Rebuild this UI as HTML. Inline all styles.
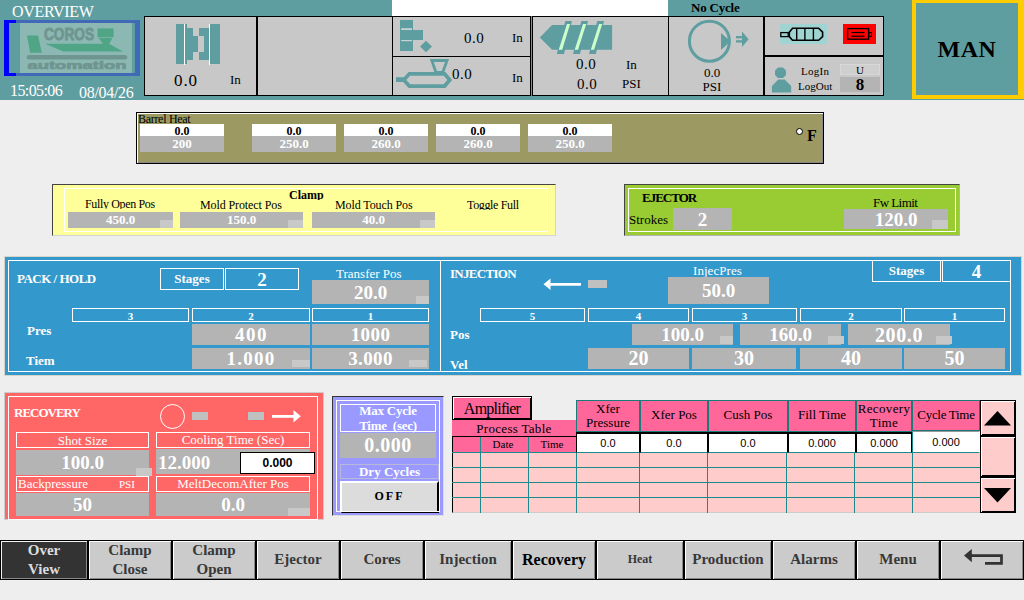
<!DOCTYPE html>
<html><head><meta charset="utf-8"><title>Overview</title>
<style>
html,body{margin:0;padding:0;}
body{width:1024px;height:600px;overflow:hidden;background:#eeeeee;position:relative;font-family:"Liberation Serif",serif;color:#000;}
.a{position:absolute;box-sizing:border-box;white-space:nowrap;line-height:1;}
.c{text-align:center;}
.b{font-weight:bold;}
.w{color:#fff;}
.g{background:#b4b4b4;}
.sq{background:#c8c8c8;}
.p{background:#c8c8c8;border:1px solid #000;}
.wf{border:1px solid #fff;}
.f20{font-size:20px;font-weight:bold;color:#fff;text-align:center;}
.f19{font-size:19px;font-weight:bold;color:#fff;text-align:center;}
.f13{font-size:13px;}
.f12{font-size:12px;}
.f11{font-size:11px;}
.sans{font-family:"Liberation Sans",sans-serif;}
.nb{top:540px;height:40px;background:#cbcbcb;border:1px solid #000;box-shadow:inset 1px 1px 0 #fff,inset -1px -1px 0 #888;font-size:15px;font-weight:bold;color:#383838;text-align:center;padding-top:0.4px;}
.hc{background:#ff6699;border:1px solid #1a7a7a;font-size:13px;text-align:center;top:400px;height:32px;}
.wc{background:#fff;border:1px solid #000;border-top-width:2px;border-bottom-color:#1a8a8a;top:432px;height:21px;font-family:"Liberation Sans",sans-serif;font-size:11px;text-align:center;line-height:19px;}
</style></head><body>
<!-- HEADER -->
<div class="a" id="hdr" style="left:0;top:0;width:1024px;height:100px;background:#5f9ea0;"></div>
<div class="a" style="left:392px;top:0;width:276px;height:16px;background:#fff;"></div>
<div class="a w" style="left:12px;top:4px;font-size:16px;letter-spacing:-0.3px;">OVERVIEW</div>
<div class="a w" style="left:10px;top:83px;font-size:16px;letter-spacing:-0.6px;">15:05:06</div>
<div class="a w" style="left:79px;top:85px;font-size:16px;letter-spacing:-0.3px;">08/04/26</div>
<!-- logo -->
<div class="a" style="left:4px;top:20px;width:136px;height:56px;border:3px solid #4169b8;border-right-width:5px;"></div>
<div class="a" style="left:4px;top:20px;width:12px;height:56px;border:3px solid #0000ff;border-left-width:5px;border-right:0;"></div>
<div class="a" style="left:20px;top:23px;width:112px;height:50px;background:#8cb8b4;"></div>
<svg class="a" style="left:20px;top:23px;" width="112" height="50" viewBox="0 0 112 50">
<polygon points="7,12.4 18,12.4 21.8,29.8 10.2,29.8" fill="#4fa585"/>
<polygon points="25,20.8 89,20.8 103,28.4 43.3,28.4" fill="#4fa585"/>
<rect x="77.5" y="5.4" width="16.1" height="8.7" fill="#4fa585"/>
<polygon points="78.5,14.8 92.5,14.8 89,21 83,21" fill="#4fa585"/>
<rect x="6.7" y="32" width="100.6" height="4.4" rx="2.2" fill="#6f9591"/>
<text x="24" y="17.3" font-family="Liberation Sans, sans-serif" font-weight="bold" font-size="17" fill="#6f9591" stroke="#6f9591" stroke-width="0.9" textLength="50" lengthAdjust="spacingAndGlyphs">COROS</text>
<text x="7.5" y="45.8" font-family="Liberation Sans, sans-serif" font-weight="bold" font-size="11" fill="#6f9591" stroke="#6f9591" stroke-width="0.7" textLength="99" lengthAdjust="spacingAndGlyphs">automation</text>
</svg>
<!-- panel 1 clamp -->
<div class="a p" style="left:144px;top:16px;width:113px;height:80px;"></div>
<div class="a p" style="left:256px;top:16px;width:137px;height:80px;border-left-width:2px;"></div>
<svg class="a" style="left:175px;top:23px;" width="46" height="42" viewBox="0 0 46 42" shape-rendering="crispEdges">
<rect x="1" y="1" width="11" height="40" fill="#5f9ea0"/><rect x="9" y="0.6" width="1.2" height="41" fill="#fff"/>
<rect x="12" y="5" width="6" height="32" fill="#5f9ea0"/><rect x="18" y="13" width="4.7" height="16" fill="#5f9ea0"/>
<polygon points="24,5 33.8,5 33.8,37 24,37 24,29 28.7,29 28.7,13 24,13" fill="#5f9ea0"/>
<rect x="33.8" y="0.6" width="1.2" height="41" fill="#fff"/><rect x="35" y="1" width="9.7" height="40" fill="#5f9ea0"/>
</svg>
<div class="a" style="left:174px;top:72px;font-size:17px;letter-spacing:0.9px;">0.0</div>
<div class="a" style="left:230px;top:73px;font-size:13px;">In</div>
<!-- panel 3 -->
<div class="a p" style="left:392px;top:16px;width:139px;height:41px;"></div>
<div class="a p" style="left:392px;top:56px;width:139px;height:40px;"></div>
<svg class="a" style="left:396px;top:18px;" width="40" height="36" viewBox="0 0 40 36">
<rect x="4" y="2" width="13" height="31" fill="#5f9ea0"/><rect x="4" y="12" width="23" height="10" fill="#5f9ea0"/>
<rect x="5.2" y="10.2" width="10.8" height="1.8" fill="#c4d4d4"/><rect x="5.2" y="22" width="10.8" height="1.2" fill="#c4d4d4"/>
<polygon points="30,22.8 36,28.5 30,34.2 24,28.5" fill="#5f9ea0"/>
</svg>
<div class="a" style="left:464px;top:31px;font-size:15px;letter-spacing:0.5px;">0.0</div>
<div class="a" style="left:512px;top:31px;font-size:13px;">In</div>
<svg class="a" style="left:394px;top:57px;" width="60" height="34" viewBox="0 0 60 34">
<rect x="2" y="20.2" width="9" height="4.8" fill="#5f9ea0"/>
<polygon points="9.8,22.95 15.4,16.85 50.6,16.85 55.8,22.95 50.6,29.05 15.4,29.05" fill="none" stroke="#5f9ea0" stroke-width="3.7" stroke-linejoin="miter"/>
<polygon points="37.8,3.5 53.1,3.5 48.6,15.5 42,15.5" fill="none" stroke="#5f9ea0" stroke-width="2.8"/>
</svg>
<div class="a" style="left:452px;top:67px;font-size:15px;letter-spacing:0.5px;">0.0</div>
<div class="a" style="left:512px;top:71px;font-size:13px;">In</div>
<!-- panel 4 screw -->
<div class="a p" style="left:532px;top:16px;width:137px;height:80px;"></div>
<svg class="a" style="left:538px;top:18px;" width="78" height="38" viewBox="0 0 78 38">
<polygon points="1.8,19.4 14.1,7 74.1,7 74.1,31.8 14.1,31.8" fill="#5f9ea0"/>
<g fill="#5f9ea0"><polygon points="18.8,36 26,36 33.9,3 27.3,3"/><polygon points="35,36 42,36 50,3 43.3,3"/><polygon points="51,36 57.9,36 66,3 59.2,3"/></g>
<g fill="#ccffcc"><polygon points="20.7,31.8 24.2,31.8 32.1,6 29,6"/><polygon points="36.7,31.8 40,31.8 48.2,6 45,6"/><polygon points="52.8,31.8 56.1,31.8 64.2,6 61.1,6"/></g>
</svg>
<div class="a" style="left:576px;top:57px;font-size:15px;letter-spacing:0.5px;">0.0</div>
<div class="a" style="left:626px;top:58px;font-size:13px;">In</div>
<div class="a" style="left:577px;top:77px;font-size:15px;letter-spacing:0.5px;">0.0</div>
<div class="a" style="left:622px;top:77px;font-size:13px;">PSI</div>
<!-- panel 5 pump -->
<div class="a b" style="left:691px;top:1px;font-size:13px;letter-spacing:-0.2px;">No Cycle</div>
<div class="a p" style="left:668px;top:16px;width:97px;height:80px;border-right-width:2px;"></div>
<svg class="a" style="left:685px;top:18px;" width="70" height="48" viewBox="0 0 70 48">
<circle cx="24.4" cy="23.2" r="20" fill="none" stroke="#5f9ea0" stroke-width="3"/>
<polygon points="36,15 36,32 45.6,23.2" fill="#5f9ea0"/>
<g stroke="#5f9ea0" stroke-width="2.3" fill="none"><line x1="51" y1="19.2" x2="59" y2="19.2"/><line x1="51" y1="23.4" x2="59" y2="23.4"/></g>
<polygon points="57,13.6 63.6,21.2 57,29" fill="#5f9ea0"/>
</svg>
<div class="a c" style="left:692px;top:66px;width:40px;font-size:13px;">0.0</div>
<div class="a c" style="left:692px;top:80px;width:40px;font-size:13px;">PSI</div>
<!-- panel 6 -->
<div class="a p" style="left:763px;top:16px;width:121px;height:41px;border-left-width:2px;border-bottom-width:2px;"></div>
<div class="a p" style="left:763px;top:55px;width:121px;height:41px;border-left-width:2px;border-top-width:2px;"></div>
<div class="a" style="left:780px;top:24px;width:47px;height:20px;background:#9fd4d2;"></div>
<svg class="a" style="left:780px;top:24px;" width="47" height="20" viewBox="0 0 47 20">
<rect x="0.8" y="8.6" width="7.4" height="4" fill="#9fd4d2" stroke="#000" stroke-width="1.3"/>
<polygon points="9.3,8.2 12.5,4.2 38.6,4.2 42.6,8.2 42.6,12.6 38.6,16.3 12.5,16.3 9.3,12.6" fill="#9fd4d2" stroke="#000" stroke-width="1.6"/>
<g stroke="#000" stroke-width="1.4"><line x1="16.7" y1="4.2" x2="16.7" y2="16.3"/><line x1="24.9" y1="4.2" x2="24.9" y2="16.3"/><line x1="33.4" y1="4.2" x2="33.4" y2="16.3"/></g>
</svg>
<div class="a" style="left:843px;top:24px;width:33px;height:20px;background:#ff0000;"></div>
<svg class="a" style="left:843px;top:24px;" width="33" height="20" viewBox="0 0 33 20">
<rect x="4.6" y="4.6" width="21" height="10.6" fill="none" stroke="#000" stroke-width="1.3"/>
<rect x="25.8" y="8.6" width="2.6" height="3.8" fill="none" stroke="#000" stroke-width="1"/>
<g stroke="#000" stroke-width="1.2"><line x1="8" y1="8.5" x2="21.5" y2="8.5"/><line x1="8" y1="12.2" x2="21.5" y2="12.2"/></g>
</svg>
<svg class="a" style="left:770px;top:64.7px;" width="24" height="30" viewBox="0 0 24 30">
<polygon points="8,2.5 13,2.5 16,5.5 16,10 13,13 8,13 5,10 5,5.5" fill="#5f9ea0"/>
<polygon points="8.3,14.5 14.7,14.5 21.2,21 21.2,27.6 1.9,27.6 1.9,21" fill="#5f9ea0"/>
</svg>
<div class="a" style="left:801px;top:65.5px;font-size:11px;letter-spacing:0.25px;">LogIn</div>
<div class="a" style="left:798px;top:80.5px;font-size:11px;">LogOut</div>
<div class="a c" style="left:840px;top:64px;width:40px;height:11px;background:#cfcfcf;border:1px solid #d8d8d8;font-size:11px;line-height:10px;">U</div>
<div class="a c b" style="left:840px;top:77px;width:40px;height:15px;background:#b4b4b4;font-size:17px;line-height:15px;">8</div>
<!-- MAN -->
<div class="a c b" style="left:912px;top:0;width:112px;height:99px;border:4px solid #ffcc00;border-top-width:3px;border-right-width:6px;font-size:24px;line-height:92px;padding-left:0px;letter-spacing:0.5px;">MAN</div>

<!-- BARREL HEAT -->
<div class="a" style="left:136px;top:112px;width:688px;height:52px;background:#9c9a62;border:1px solid #000;box-shadow:inset 1px 1px 0 #fff,inset -1px -1px 0 #888;"></div>
<div class="a" style="left:138px;top:113px;font-size:12px;letter-spacing:-0.3px;">Barrel Heat</div>
<div class="a c b" style="left:140px;top:124px;width:84px;height:12px;background:#fff;font-size:12px;line-height:14px;">0.0</div>
<div class="a c b w g" style="left:140px;top:136px;width:84px;height:16px;font-size:13px;line-height:16px;">200</div>
<div class="a c b" style="left:252px;top:124px;width:84px;height:12px;background:#fff;font-size:12px;line-height:14px;">0.0</div>
<div class="a c b w g" style="left:252px;top:136px;width:84px;height:16px;font-size:13px;line-height:16px;">250.0</div>
<div class="a c b" style="left:344px;top:124px;width:84px;height:12px;background:#fff;font-size:12px;line-height:14px;">0.0</div>
<div class="a c b w g" style="left:344px;top:136px;width:84px;height:16px;font-size:13px;line-height:16px;">260.0</div>
<div class="a c b" style="left:436px;top:124px;width:84px;height:12px;background:#fff;font-size:12px;line-height:14px;">0.0</div>
<div class="a c b w g" style="left:436px;top:136px;width:84px;height:16px;font-size:13px;line-height:16px;">260.0</div>
<div class="a c b" style="left:528px;top:124px;width:84px;height:12px;background:#fff;font-size:12px;line-height:14px;">0.0</div>
<div class="a c b w g" style="left:528px;top:136px;width:84px;height:16px;font-size:13px;line-height:16px;">250.0</div>
<div class="a" style="left:796px;top:128px;width:7px;height:7px;border-radius:50%;background:#fff;border:1px solid #000;"></div>
<div class="a b" style="left:807px;top:128px;font-size:16px;">F</div>
<!-- CLAMP -->
<div class="a" style="left:52px;top:184px;width:504px;height:52px;background:#ffff99;border:1px solid #d4d4d4;border-top-color:#444;border-left-color:#444;"></div>
<div class="a wf" style="left:64px;top:188px;width:484px;height:44px;"></div>
<div class="a b" style="left:289px;top:189px;font-size:12px;height:11px;overflow:hidden;">Clamp</div>
<div class="a" style="left:85px;top:198px;font-size:12px;letter-spacing:-0.35px;height:11px;overflow:hidden;">Fully Open Pos</div>
<div class="a" style="left:200px;top:199px;font-size:12px;letter-spacing:-0.1px;">Mold Protect Pos</div>
<div class="a" style="left:335px;top:199px;font-size:12px;letter-spacing:-0.1px;">Mold Touch Pos</div>
<div class="a" style="left:467px;top:199px;font-size:12px;letter-spacing:-0.35px;height:11px;overflow:hidden;">Toggle Full</div>
<div class="a c b w g" style="left:68px;top:212px;width:105px;height:16px;font-size:13px;line-height:16px;">450.0</div>
<div class="a sq" style="left:160px;top:220px;width:13px;height:8px;"></div>
<div class="a c b w g" style="left:180px;top:212px;width:123px;height:16px;font-size:13px;line-height:16px;">150.0</div>
<div class="a sq" style="left:288px;top:220px;width:15px;height:8px;"></div>
<div class="a c b w g" style="left:312px;top:212px;width:123px;height:16px;font-size:13px;line-height:16px;">40.0</div>
<div class="a sq" style="left:420px;top:220px;width:15px;height:8px;"></div>
<!-- EJECTOR -->
<div class="a" style="left:624px;top:184px;width:336px;height:52px;background:#99cc33;border:1px solid #b4b4b4;border-top-color:#444;border-left-color:#444;"></div>
<div class="a wf" style="left:628px;top:188px;width:328px;height:44px;"></div>
<div class="a b" style="left:642px;top:191px;font-size:13px;letter-spacing:-1px;">EJECTOR</div>
<div class="a" style="left:629px;top:213px;font-size:13px;">Strokes</div>
<div class="a g f19" style="left:673px;top:208px;width:59px;height:22px;line-height:24px;">2</div>
<div class="a" style="left:873px;top:196px;font-size:13px;letter-spacing:-0.55px;">Fw Limit</div>
<div class="a g f19" style="left:844px;top:209px;width:104px;height:20px;line-height:21px;">120.0</div>
<div class="a sq" style="left:932px;top:220px;width:16px;height:9px;"></div>
<!-- PACK/HOLD + INJECTION -->
<div class="a" style="left:4px;top:256px;width:1018px;height:120px;background:#3399cc;border:1px solid #d8d4cc;"></div>
<div class="a wf" style="left:8px;top:260px;width:1003px;height:112px;"></div>
<div class="a" style="left:440px;top:260px;width:1px;height:112px;background:#fff;"></div>
<div class="a b w" style="left:17px;top:272px;font-size:13px;letter-spacing:-0.5px;">PACK / HOLD</div>
<div class="a wf c b w" style="left:160px;top:268px;width:64px;height:22px;font-size:13px;line-height:20px;">Stages</div>
<div class="a wf f19" style="left:225px;top:268px;width:74px;height:22px;line-height:21px;">2</div>
<div class="a w" style="left:336px;top:267px;font-size:13px;">Transfer Pos</div>
<div class="a g f19" style="left:312px;top:280px;width:117px;height:24px;line-height:25px;">20.0</div>
<div class="a sq" style="left:416px;top:296px;width:13px;height:8px;"></div>
<div class="a wf c b w f11" style="left:72px;top:308px;width:117px;height:14px;line-height:14px;overflow:hidden;">3</div>
<div class="a wf c b w f11" style="left:192px;top:308px;width:118px;height:14px;line-height:14px;overflow:hidden;">2</div>
<div class="a wf c b w f11" style="left:312px;top:308px;width:117px;height:14px;line-height:14px;overflow:hidden;">1</div>
<div class="a b w" style="left:27px;top:324px;font-size:13px;">Pres</div>
<div class="a b w" style="left:26px;top:354px;font-size:13px;">Tiem</div>
<div class="a g f19" style="left:192px;top:324px;width:118px;height:21px;line-height:21px;letter-spacing:1.5px;padding-left:1px;">400</div>
<div class="a g f19" style="left:312px;top:324px;width:117px;height:21px;line-height:21px;letter-spacing:0.4px;">1000</div>
<div class="a g f19" style="left:192px;top:348px;width:118px;height:21px;line-height:21px;letter-spacing:1.3px;">1.000</div>
<div class="a g f19" style="left:312px;top:348px;width:117px;height:21px;line-height:21px;letter-spacing:0.4px;">3.000</div>
<div class="a sq" style="left:292px;top:360px;width:18px;height:7px;"></div>
<div class="a sq" style="left:409px;top:360px;width:18px;height:7px;"></div>
<div class="a b w" style="left:450px;top:267px;font-size:13px;letter-spacing:-0.7px;">INJECTION</div>
<svg class="a" style="left:542px;top:277px;" width="42" height="15" viewBox="0 0 42 15"><line x1="5" y1="7.4" x2="39" y2="7.4" stroke="#fff" stroke-width="2.8"/><polygon points="1.5,7.3 8.5,1.5 8.5,13" fill="#fff"/></svg>
<div class="a" style="left:588px;top:280px;width:19px;height:8px;background:#c0c0c0;"></div>
<div class="a w" style="left:693px;top:264px;font-size:13px;letter-spacing:0.05px;">InjecPres</div>
<div class="a g f19" style="left:668px;top:277px;width:101px;height:27px;line-height:27px;">50.0</div>
<div class="a wf c b w" style="left:872px;top:260px;width:69px;height:22px;font-size:13px;line-height:20px;">Stages</div>
<div class="a wf f19" style="left:942px;top:260px;width:69px;height:22px;line-height:21px;">4</div>
<div class="a wf c b w f11" style="left:480px;top:308px;width:105px;height:14px;line-height:14px;overflow:hidden;">5</div>
<div class="a wf c b w f11" style="left:588px;top:308px;width:101px;height:14px;line-height:14px;overflow:hidden;">4</div>
<div class="a wf c b w f11" style="left:692px;top:308px;width:105px;height:14px;line-height:14px;overflow:hidden;">3</div>
<div class="a wf c b w f11" style="left:800px;top:308px;width:102px;height:14px;line-height:14px;overflow:hidden;">2</div>
<div class="a wf c b w f11" style="left:904px;top:308px;width:101px;height:14px;line-height:14px;overflow:hidden;">1</div>
<div class="a b w" style="left:450px;top:328px;font-size:13px;">Pos</div>
<div class="a b w" style="left:450px;top:358px;font-size:13px;">Vel</div>
<div class="a g f19" style="left:632px;top:324px;width:101px;height:21px;line-height:22px;">100.0</div>
<div class="a g f19" style="left:740px;top:324px;width:101px;height:21px;line-height:22px;">160.0</div>
<div class="a g f20" style="left:848px;top:324px;width:102px;height:21px;line-height:22px;letter-spacing:0.6px;">200.0</div>
<div class="a sq" style="left:720px;top:336px;width:13px;height:8px;"></div>
<div class="a sq" style="left:828px;top:336px;width:16px;height:8px;"></div>
<div class="a sq" style="left:936px;top:336px;width:16px;height:8px;"></div>
<div class="a g f20" style="left:588px;top:348px;width:101px;height:21px;line-height:21px;">20</div>
<div class="a g f20" style="left:692px;top:348px;width:104px;height:21px;line-height:21px;">30</div>
<div class="a g f20" style="left:800px;top:348px;width:102px;height:21px;line-height:21px;">40</div>
<div class="a g f20" style="left:904px;top:348px;width:101px;height:21px;line-height:21px;">50</div>

<!-- RECOVERY -->
<div class="a" style="left:4px;top:392px;width:320px;height:128px;background:#ff6666;border:1px solid #ccc;"></div>
<div class="a wf" style="left:8px;top:396px;width:310px;height:124px;"></div>
<div class="a b w" style="left:14px;top:406px;font-size:13px;letter-spacing:-1px;">RECOVERY</div>
<div class="a" style="left:160px;top:404px;width:25px;height:25px;border:1px solid #fff;border-radius:50%;"></div>
<div class="a" style="left:192px;top:412px;width:16px;height:8px;background:#c0c0c0;"></div>
<div class="a" style="left:248px;top:412px;width:16px;height:8px;background:#c0c0c0;"></div>
<svg class="a" style="left:270px;top:408px;" width="34" height="17" viewBox="0 0 34 17"><line x1="2" y1="8.4" x2="27" y2="8.4" stroke="#fff" stroke-width="2.8"/><polygon points="30.8,8.3 23.5,2 23.5,14.6" fill="#fff"/></svg>
<div class="a wf c w f13" style="left:16px;top:432px;width:133px;height:16px;line-height:15px;">Shot Size</div>
<div class="a g f19" style="left:16px;top:450px;width:133px;height:25px;line-height:25px;">100.0</div>
<div class="a sq" style="left:136px;top:468px;width:16px;height:8px;"></div>
<div class="a wf w f13" style="left:16px;top:476px;width:133px;height:16px;line-height:14px;padding-left:1px;overflow:hidden;">Backpressure<span style="position:absolute;left:102px;font-size:11px;top:0px;">PSI</span></div>
<div class="a g f19" style="left:16px;top:493px;width:133px;height:23px;line-height:23px;">50</div>
<div class="a wf c w f13" style="left:156px;top:432px;width:154px;height:16px;line-height:14px;">Cooling Time (Sec)</div>
<div class="a g f19" style="left:156px;top:449px;width:154px;height:25px;line-height:27px;text-align:left;padding-left:2px;">12.000</div>
<div class="a c b sans" style="left:240px;top:452px;width:75px;height:22px;background:#fff;border:1px solid #000;font-size:12px;line-height:21px;">0.000</div>
<div class="a wf c w f13" style="left:156px;top:476px;width:154px;height:16px;line-height:14px;">MeltDecomAfter Pos</div>
<div class="a g f19" style="left:156px;top:493px;width:154px;height:23px;line-height:23px;">0.0</div>
<div class="a sq" style="left:288px;top:508px;width:22px;height:8px;"></div>
<!-- CYCLE -->
<div class="a" style="left:332px;top:396px;width:112px;height:120px;background:#9999ff;border:1px solid #ddd;border-top:1px solid #333;border-left:1px solid #333;"></div>
<div class="a wf c b w f13" style="left:340px;top:404px;width:96px;height:28px;line-height:14px;padding-top:0px;white-space:normal;letter-spacing:-0.25px;"><span style="position:relative;top:-1px;">Max Cycle</span><br>Time&nbsp; (sec)</div>
<div class="a g f20" style="left:340px;top:433px;width:96px;height:25px;line-height:25px;letter-spacing:0.5px;">0.000</div>
<div class="a c b w f13" style="left:340px;top:464px;width:99px;height:15px;line-height:14px;border:1px solid #b8b8d8;">Dry Cycles</div>
<div class="a c b" style="left:340px;top:481px;width:99px;height:31px;background:#dcdcdc;border:2px solid #000;border-top-color:#fff;border-left-color:#fff;border-bottom-width:1px;height:32px;font-size:12px;line-height:27px;letter-spacing:2px;">OFF</div>
<div class="a wf" style="left:336px;top:400px;width:104px;height:112px;"></div>
<!-- TABLE -->
<div class="a c" style="left:452px;top:396px;width:80px;height:24px;background:#ff6699;border:1px solid #000;box-shadow:inset 1px 1px 0 #fff,inset -1px -1px 0 #000;font-size:16px;line-height:23px;letter-spacing:-0.75px;">Amplifier</div>
<div class="a c f13" style="left:452px;top:420px;width:124px;height:17px;background:#ff6699;border-bottom:1px solid #000;line-height:17px;letter-spacing:0.3px;">Process Table</div>
<div class="a" style="left:452px;top:437px;width:528px;height:76px;background:#ffcccc;border-left:1px solid #000;border-bottom:1px solid #ccc;"></div>
<div class="a" style="left:453px;top:437px;width:123px;height:15px;background:#ff6699;"></div>
<div class="a c f11" style="left:479px;top:437px;width:48px;line-height:15px;">Date</div>
<div class="a c f11" style="left:528px;top:437px;width:48px;line-height:15px;">Time</div>
<svg class="a" style="left:452px;top:437px;" width="528" height="76" viewBox="0 0 528 76"><g stroke="#1a8a8a" stroke-width="1" shape-rendering="crispEdges">
<line x1="0" y1="15.5" x2="528" y2="15.5"/><line x1="0" y1="30.5" x2="528" y2="30.5"/><line x1="0" y1="45.5" x2="528" y2="45.5"/><line x1="0" y1="60.5" x2="528" y2="60.5"/>
<line x1="28.5" y1="0" x2="28.5" y2="76"/><line x1="76.5" y1="0" x2="76.5" y2="76"/><line x1="124.5" y1="0" x2="124.5" y2="76"/><line x1="187.5" y1="0" x2="187.5" y2="76"/><line x1="255.5" y1="0" x2="255.5" y2="76"/><line x1="334.5" y1="0" x2="334.5" y2="76"/><line x1="402.5" y1="0" x2="402.5" y2="76"/><line x1="460.5" y1="0" x2="460.5" y2="76"/></g></svg>
<div class="a hc" style="left:576px;width:64px;line-height:14px;padding-top:1px;white-space:normal;">Xfer<br>Pressure</div>
<div class="a hc" style="left:640px;width:68px;line-height:28px;">Xfer Pos</div>
<div class="a hc" style="left:708px;width:80px;line-height:28px;">Cush Pos</div>
<div class="a hc" style="left:788px;width:68px;line-height:28px;">Fill Time</div>
<div class="a hc" style="left:856px;width:56px;line-height:14px;padding-top:1px;white-space:normal;letter-spacing:0.35px;">Recovery<br>Time</div>
<div class="a hc" style="left:912px;width:68px;line-height:28px;height:31px;letter-spacing:-0.3px;">Cycle Time</div>
<div class="a wc" style="left:576px;width:64px;">0.0</div>
<div class="a wc" style="left:640px;width:68px;">0.0</div>
<div class="a wc" style="left:708px;width:80px;">0.0</div>
<div class="a wc" style="left:788px;width:68px;">0.000</div>
<div class="a wc" style="left:856px;width:56px;">0.000</div>
<div class="a wc" style="left:912px;width:68px;top:431px;height:22px;border-width:1px;border-color:#999 #fff #1a8a8a #1a8a8a;line-height:20px;">0.000</div>
<div class="a" style="left:980px;top:400px;width:36px;height:36px;background:#ffcccc;border:1px solid #000;box-shadow:inset 1px 1px 0 #fff,inset -1px -1px 0 #000;"></div>
<div class="a" style="left:980px;top:436px;width:36px;height:41px;background:#ffcccc;border:1px solid #000;box-shadow:inset 1px 1px 0 #fff,inset -1px -1px 0 #000;"></div>
<div class="a" style="left:980px;top:477px;width:36px;height:36px;background:#ffcccc;border:1px solid #000;box-shadow:inset 1px 1px 0 #fff,inset -1px -1px 0 #000;"></div>
<svg class="a" style="left:980px;top:400px;" width="36" height="113" viewBox="0 0 36 113"><polygon points="4,25.5 31,25.5 17.5,11" fill="#000"/><polygon points="4,88 31,88 17.5,102.5" fill="#000"/></svg>
<!-- NAV -->
<div class="a" style="left:0;top:540px;width:1024px;height:40px;background:#c8c8c8;border-top:1px solid #000;border-bottom:1px solid #000;"></div>
<div class="a nb" style="left:0px;width:88px;background:#333;color:#ddd;line-height:19px;box-shadow:inset 1px 1px 0 #f4f4f4,inset -1px -1px 0 #888;white-space:normal;">Over<br>View</div>
<div class="a nb" style="left:88px;width:84px;line-height:19px;white-space:normal;">Clamp<br>Close</div>
<div class="a nb" style="left:172px;width:84px;line-height:19px;white-space:normal;">Clamp<br>Open</div>
<div class="a nb" style="left:256px;width:84px;line-height:37px;">Ejector</div>
<div class="a nb" style="left:340px;width:84px;line-height:37px;">Cores</div>
<div class="a nb" style="left:424px;width:88px;line-height:37px;">Injection</div>
<div class="a nb" style="left:512px;width:84px;line-height:37px;color:#000;font-size:16px;">Recovery</div>
<div class="a nb" style="left:596px;width:88px;line-height:37px;font-size:12px;">Heat</div>
<div class="a nb" style="left:684px;width:88px;line-height:37px;">Production</div>
<div class="a nb" style="left:772px;width:84px;line-height:37px;">Alarms</div>
<div class="a nb" style="left:856px;width:84px;line-height:37px;">Menu</div>
<div class="a nb" style="left:940px;width:84px;"></div>
<svg class="a" style="left:960px;top:546px;" width="46" height="22" viewBox="0 0 46 22"><path d="M10,9.7 H41.5 V17.4 H25" fill="none" stroke="#333" stroke-width="2.7"/><polygon points="4,9.6 11.8,3 11.8,16.2" fill="#333"/></svg>
</body></html>
